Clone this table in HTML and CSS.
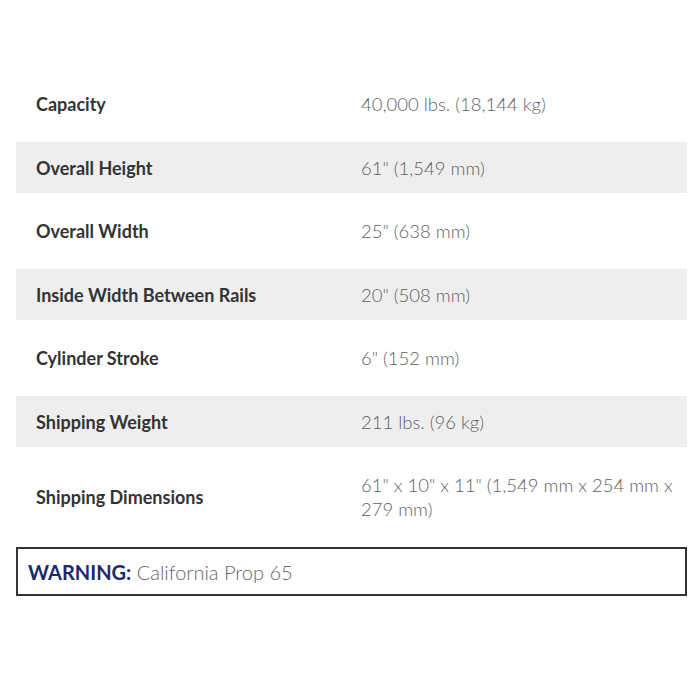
FILE: index.html
```html
<!DOCTYPE html>
<html lang="en">
<head>
<meta charset="utf-8">
<title>Specifications</title>
<link rel="stylesheet" href="styles.css">
</head>
<body>
<div class="page">
  <div class="specs">
    <div class="row"><div class="label">Capacity</div><div class="value">40,000 lbs. (18,144 kg)</div></div>
    <div class="row alt"><div class="label">Overall Height</div><div class="value">61" (1,549 mm)</div></div>
    <div class="row"><div class="label">Overall Width</div><div class="value">25" (638 mm)</div></div>
    <div class="row alt"><div class="label">Inside Width Between Rails</div><div class="value">20" (508 mm)</div></div>
    <div class="row"><div class="label">Cylinder Stroke</div><div class="value">6" (152 mm)</div></div>
    <div class="row alt"><div class="label">Shipping Weight</div><div class="value">211 lbs. (96 kg)</div></div>
    <div class="row tall"><div class="label">Shipping Dimensions</div><div class="value">61" x 10" x 11" (1,549 mm x 254 mm x 279 mm)</div></div>
  </div>
  <div class="warning"><span class="warn-title">WARNING:</span> California Prop 65</div>
</div>
</body>
</html>
```
FILE: styles.css
```css
html, body {
  margin: 0;
  padding: 0;
  background: #ffffff;
}
.page {
  padding: 66px 13px 0 16px;
  font-family: Lato, "Open Sans", "Liberation Sans", sans-serif;
}
.specs {
  display: flex;
  flex-direction: column;
}
.row {
  display: grid;
  grid-template-columns: 345px 1fr;
  align-items: center;
  min-height: 76px;
}
.row.alt {
  background: #eeeeee;
  min-height: 51px;
}
.row.tall {
  min-height: 100px;
}
.label {
  padding-left: 20px;
  font-weight: 700;
  font-size: 18px;
  color: #333333;
}
.value {
  padding-right: 8px;
  font-size: 18.5px;
  line-height: 24px;
  font-weight: 300;
  color: #5f5f5f;
}
.warning {
  border: 2px solid #333333;
  box-sizing: border-box;
  height: 49px;
  display: flex;
  align-items: center;
  padding-left: 10px;
  font-size: 20px;
  font-weight: 300;
  color: #666666;
  white-space: pre;
}
.warn-title {
  font-weight: 700;
  color: #1b2a6b;
}
```
